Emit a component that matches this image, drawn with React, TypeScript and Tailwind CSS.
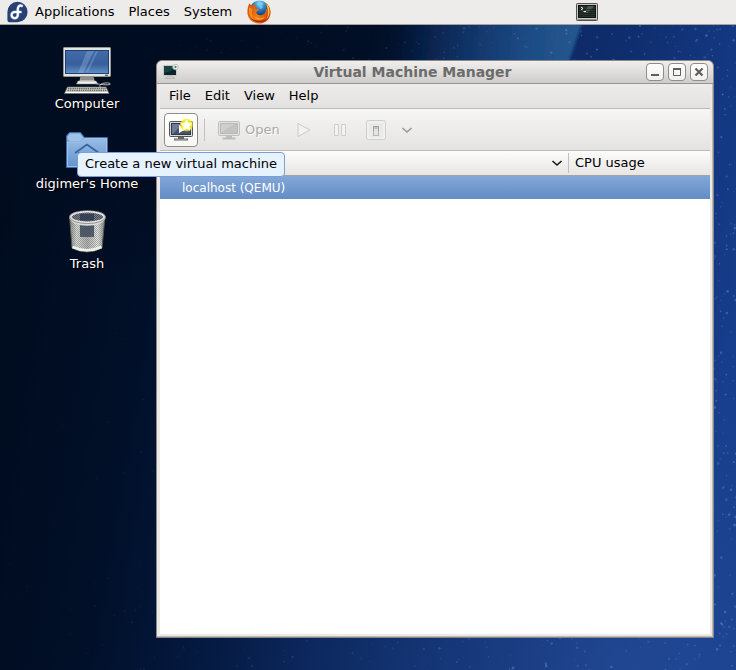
import React from 'react';

interface DesktopIconProps {
  label: string;
  children: React.ReactNode;
}

interface Star {
  x: number;
  y: number;
  r: number;
  o: number;
}

// small seeded generator so the wallpaper is the same on every load
const makeStars = (count: number): Star[] => {
  let seed = 4711;
  const next = () => {
    seed = (seed * 16807) % 2147483647;
    return seed / 2147483647;
  };
  return Array.from({ length: count }, () => {
    const x = Math.sqrt(next()) * 736;
    const y = next() * 670;
    return { x, y, r: 0.6 + next() * 0.8, o: (0.08 + next() * 0.35) * Math.min(1, (x * x) / 360000 + (y * 0.15) / 600) };
  });
};

const stars = makeStars(2200);

const Wallpaper = () => (
  <svg
    className="absolute inset-0 -z-10 h-full w-full"
    viewBox="0 0 736 670"
    preserveAspectRatio="xMidYMid slice"
    aria-hidden="true"
  >
    <defs>
      <linearGradient id="sky" x1="0" y1="0.35" x2="1" y2="0.5">
        <stop offset="0" stopColor="#000c1e" />
        <stop offset="0.2" stopColor="#010f28" />
        <stop offset="0.35" stopColor="#04193e" />
        <stop offset="0.5" stopColor="#092253" />
        <stop offset="0.8" stopColor="#0f2e6e" />
        <stop offset="1" stopColor="#163d8b" />
      </linearGradient>
      <radialGradient id="glow" cx="620" cy="680" r="400" gradientUnits="userSpaceOnUse">
        <stop offset="0" stopColor="#284e9a" stopOpacity="0.7" />
        <stop offset="1" stopColor="#1c4590" stopOpacity="0" />
      </radialGradient>
      <radialGradient id="dusk" cx="200" cy="0" r="300" gradientUnits="userSpaceOnUse">
        <stop offset="0" stopColor="#000c20" />
        <stop offset="0.6" stopColor="#000c20" stopOpacity="0.85" />
        <stop offset="1" stopColor="#000c20" stopOpacity="0" />
      </radialGradient>
      <linearGradient id="beam" x1="400" y1="25" x2="582" y2="45" gradientUnits="userSpaceOnUse">
        <stop offset="0" stopColor="#12386c" stopOpacity="0" />
        <stop offset="0.35" stopColor="#153d72" stopOpacity="0.6" />
        <stop offset="0.7" stopColor="#1f4f88" stopOpacity="0.9" />
        <stop offset="1" stopColor="#24588f" />
      </linearGradient>
      <filter id="soften">
        <feGaussianBlur stdDeviation="1.5" />
      </filter>
    </defs>
    <rect width="736" height="670" fill="url(#sky)" />
    <rect width="736" height="670" fill="url(#glow)" />
    <rect width="736" height="670" fill="url(#dusk)" />
    <path d="M400 0H590L566 70L480 300H330Z" fill="url(#beam)" filter="url(#soften)" />
    {stars.map((s, i) => (
      <circle key={i} cx={s.x} cy={s.y} r={s.r} fill="#7fa6e6" opacity={s.o} />
    ))}
  </svg>
);

const FedoraLogo = () => (
  <svg className="h-[22px] w-[21px]" viewBox="0 0 21 22" aria-hidden="true">
    <path d="M10.500.8A10.100 10.200 0 1 1 10.500 21.200H2.500Q.4 21.200.4 19V11A10.100 10.200 0 0 1 10.500.8Z" fill="#294172" />
    <path
      d="M14.800 4.900C12.300 3.900 10.800 5.700 10.800 8.300V14A3.100 3.100 0 1 1 7.700 11H13.500"
      fill="none"
      stroke="#7c96c8"
      strokeWidth="3"
      strokeLinecap="round"
    />
    <path
      d="M14.800 4.900C12.300 3.900 10.800 5.700 10.800 8.300V14A3.100 3.100 0 1 1 7.700 11H13.500"
      fill="none"
      stroke="#fff"
      strokeWidth="2"
      strokeLinecap="round"
    />
  </svg>
);

const FirefoxLogo = () => (
  <svg className="h-6 w-6" viewBox="0 0 24 24" aria-hidden="true">
    <defs>
      <radialGradient id="globe" cx="0.5" cy="0.15" r="0.8">
        <stop offset="0" stopColor="#8cdaf2" />
        <stop offset="0.35" stopColor="#2e87cb" />
        <stop offset="0.8" stopColor="#10306e" />
      </radialGradient>
      <linearGradient id="fox" x1="0" y1="0.3" x2="1" y2="0.8">
        <stop offset="0" stopColor="#dc520c" />
        <stop offset="0.5" stopColor="#ee7d18" />
        <stop offset="1" stopColor="#c93707" />
      </linearGradient>
    </defs>
    <circle cx="12.500" cy="10.500" r="10" fill="url(#globe)" />
    <path d="M11 1.500Q15 1 16.500 3.500L15 5.500L16 8L13 9L12 6L10 4Z" fill="#7ccdec" opacity="0.7" />
    <path
      d="M2.500 3.200C3 4.500 4 5.200 5.300 5.400C6.800 4.500 8.600 4.800 10 5.700C8.800 6.300 8.200 7.300 8.300 8.400C9.500 8.700 11 8.500 12 9.300C11.600 10.800 10 11 9.300 12.300C9.700 14.800 12.500 16 15.200 15C18 14 19.200 11.500 18.700 8.500C19.500 9 19.900 9.500 20.200 10.300C20.500 7 19.500 4.500 17.500 2.500C21.500 4.400 23.600 8 23.600 12.200C23.600 18.700 18.500 23.600 12 23.600C5.500 23.600.4 18.500.4 12C.4 8.500 1.200 5.500 2.500 3.200Z"
      fill="url(#fox)"
    />
    <path d="M20 4.500C23.500 9 23.300 15.500 19.500 19C22 14.500 21.500 10 20.200 7Z" fill="#ffd24a" />
    <path d="M2.300 7C1 12 3 17.500 7.500 20C5 16 4.300 12.500 5.200 9.200Z" fill="#f39021" />
    <path d="M7 15.500C10 19 14.500 19 18.300 16.500C15 21 9.500 21 7 15.500Z" fill="#f9a632" />
    <path d="M3 17.500C7 23.500 16 24 21 18C17 21.500 8 22 3 17.500Z" fill="#a8260b" />
  </svg>
);

const TerminalIcon = () => (
  <svg className="h-5 w-[22px]" viewBox="0 0 22 20" aria-hidden="true">
    <rect x="0.500" y="1.500" width="21" height="17" rx="0.800" fill="#c9cac5" stroke="#50524e" />
    <path d="M1.500 17.500H20.500" stroke="#8b8d88" />
    <rect x="2.500" y="3.500" width="17" height="12" fill="#28322f" stroke="#111" />
    <path d="M12 4L8 11H12L18 4Z" fill="#68706c" opacity="0.6" />
    <path d="M3 7.500H19M3 9.500H19M3 11.500H19M3 13.500H19" stroke="#141b19" strokeWidth="0.600" />
    <path d="M5 5L7 6.500L5 8M7.500 9.500H10" fill="none" stroke="#fff" />
  </svg>
);

const ComputerIcon = () => (
  <svg className="h-12 w-12" viewBox="0 0 48 48" aria-hidden="true">
    <defs>
      <linearGradient id="screen" x1="0" y1="0" x2="0" y2="1">
        <stop offset="0" stopColor="#416ca9" />
        <stop offset="0.6" stopColor="#375f9c" />
        <stop offset="1" stopColor="#6390c8" />
      </linearGradient>
    </defs>
    <path d="M18 29H30L32 35H16Z" fill="#cfcfca" />
    <path d="M18 30H30L31 33H17Z" fill="#8e8e88" />
    <path d="M15 34H33L35 37H13.500Z" fill="#f2f2ee" stroke="#8a8a84" strokeWidth="0.600" />
    <rect x="0.500" y="0.500" width="47" height="29" rx="0.800" fill="#e5e5df" stroke="#969890" />
    <rect x="2.500" y="3.500" width="43" height="23" fill="url(#screen)" stroke="#1d4076" />
    <path d="M24 4H31L20 26H15ZM33 4H35L25 25H23Z" fill="#a8c4e4" opacity="0.300" />
    <path d="M42 28.300H45" stroke="#444" />
    <path d="M32 36.500Q42 38.500 47 37.500Q48 35.500 42 36Q36 36.500 37 40" fill="none" stroke="#b9bbb5" strokeWidth="1" />
    <path d="M4.500 40H43L46 46.500H1.500Z" fill="#d8d8d2" stroke="#777972" strokeWidth="0.600" />
    <path d="M5 41.500H43M4.500 43.500H44" stroke="#666862" strokeWidth="1.300" strokeDasharray="1.500 0.700" />
    <path d="M2.500 45.500H45" stroke="#fff" />
  </svg>
);

const HomeFolderIcon = () => (
  <svg className="h-12 w-12" viewBox="0 0 48 48" aria-hidden="true">
    <defs>
      <linearGradient id="folder" x1="0" y1="0" x2="0" y2="1">
        <stop offset="0" stopColor="#99bce4" />
        <stop offset="1" stopColor="#6494cd" />
      </linearGradient>
    </defs>
    <path d="M3.500 40.500V9L6.500 5.500H17.500L21.500 10.500H44.500V40.500Z" fill="#6f9cd2" stroke="#3e6ba9" />
    <path d="M4.500 12.500V9.500L7 6.500H17L20.500 11L17 14.500H7Z" fill="#9fc2e8" stroke="#7fa8d8" strokeWidth="0.700" />
    <path d="M4.500 15H17.500L21.500 11.500H43.500V39.500H4.500Z" fill="url(#folder)" stroke="#a9c8ec" strokeWidth="0.800" />
    <path d="M12 26L24 17.500L36 26M16 25V34H32V25" fill="none" stroke="#3465a4" strokeWidth="1.800" />
  </svg>
);

const TrashIcon = () => (
  <svg className="h-12 w-12" viewBox="0 0 48 48" aria-hidden="true">
    <defs>
      <linearGradient id="can" x1="0" y1="0" x2="1" y2="0">
        <stop offset="0" stopColor="#8b8d89" />
        <stop offset="0.2" stopColor="#dcddd9" />
        <stop offset="0.5" stopColor="#b4b6b3" />
        <stop offset="0.8" stopColor="#e6e6e3" />
        <stop offset="1" stopColor="#8b8d89" />
      </linearGradient>
      <linearGradient id="inside" x1="0" y1="0" x2="0" y2="1">
        <stop offset="0" stopColor="#33405a" />
        <stop offset="1" stopColor="#3b475e" />
      </linearGradient>
      <pattern id="mesh" width="2" height="2" patternUnits="userSpaceOnUse">
        <rect width="1" height="1" fill="#3c3e3b" />
        <rect x="1" y="1" width="1" height="1" fill="#3c3e3b" />
      </pattern>
    </defs>
    <path d="M6.500 9L9 41Q24 49 39 41L42 9Z" fill="url(#can)" stroke="#555753" />
    <path d="M17 17H31V30H17Z" fill="url(#inside)" opacity="0.8" />
    <path d="M8 13L9.500 39Q24 46 38.500 39L41 13Q24 22 8 13Z" fill="url(#mesh)" opacity="0.350" />
    <path d="M9.500 40Q24 46.500 38.500 40" fill="none" stroke="#f0f0ed" strokeWidth="2.500" />
    <ellipse cx="24.500" cy="10" rx="17" ry="5.500" fill="#747b8a" stroke="#e8e8e5" strokeWidth="2.200" />
    <ellipse cx="24.500" cy="10" rx="15" ry="4.500" fill="url(#mesh)" opacity="0.7" />
    <path d="M17 7H31V13Q24 14 17 13Z" fill="#2c3850" opacity="0.8" />
    <path d="M7.500 11Q11 17.500 24.500 17.500Q38 17.500 41.500 11" fill="none" stroke="#dcddd9" strokeWidth="2.600" />
    <ellipse cx="24.500" cy="10" rx="18" ry="6.500" fill="none" stroke="#5b5d59" strokeWidth="0.600" />
  </svg>
);

const TitleIcon = () => (
  <svg className="h-4 w-4" viewBox="0 0 16 16" aria-hidden="true">
    <rect x="0.500" y="1.500" width="13" height="10" fill="#0b2429" stroke="#c6c9c5" />
    <path d="M1 2H12L8 7L1 9Z" fill="#1f4a46" opacity="0.8" />
    <path d="M5 12H9L12 14.500H2Z" fill="#cdcfcb" stroke="#a0a29d" strokeWidth="0.500" />
    <circle cx="12.500" cy="3" r="2.800" fill="#e6ecea" stroke="#a9b5b2" strokeWidth="0.700" />
    <path d="M11.700 1.500L14 3L11.700 4.500Z" fill="#2d7470" />
  </svg>
);

const NewMachineIcon = () => (
  <svg className="h-6 w-6" viewBox="0 0 24 24" aria-hidden="true">
    <defs>
      <radialGradient id="halo">
        <stop offset="0" stopColor="#fff83a" />
        <stop offset="0.75" stopColor="#f5ea10" stopOpacity="0.95" />
        <stop offset="1" stopColor="#f7ed12" stopOpacity="0" />
      </radialGradient>
    </defs>
    <rect x="0.500" y="3.500" width="23" height="15" rx="1" fill="#d8d9d5" stroke="#555753" />
    <rect x="2.500" y="5.500" width="19" height="11" fill="#46546f" stroke="#2f3850" />
    <path d="M3 6H13L4 16H3Z" fill="#6d7b95" />
    <path d="M10 7L17 11L10 15Z" fill="#fff" />
    <path d="M9 19H15V20.500H19V22.500H5V20.500H9Z" fill="#666864" />
    <path d="M6 21.500H18" stroke="#a5a7a2" strokeWidth="0.700" />
    <circle cx="17.500" cy="7" r="7" fill="url(#halo)" />
    <path d="M17.500 1.500L19.300 5L23 5.600L20.300 8.300L21 12.300L17.500 10.500L14 12.300L14.700 8.300L12 5.600L15.700 5Z" fill="#fff" stroke="#fffbc0" strokeWidth="0.800" />
  </svg>
);

const MonitorIcon = () => (
  <svg className="h-6 w-[22px]" viewBox="0 0 22 24" aria-hidden="true">
    <rect x="0.500" y="3.500" width="21" height="14" rx="1" fill="#e2e2e0" stroke="#c0c0bd" />
    <rect x="2.500" y="5.500" width="17" height="10" fill="#c3c3c1" stroke="#b9b9b7" />
    <path d="M3 6H16L4 14H3Z" fill="#cfcfcd" />
    <path d="M8 18H14V19.500H17.500V21.500H4.500V19.500H8Z" fill="#bcbcb9" />
  </svg>
);

const PlayIcon = () => (
  <svg className="h-4 w-[14px]" viewBox="0 0 14 16" aria-hidden="true">
    <path d="M1 1.500L13 8L1 14.500Z" fill="#f1f1f0" stroke="#cacac8" />
  </svg>
);

const PauseIcon = () => (
  <svg className="h-4 w-[14px]" viewBox="0 0 14 16" aria-hidden="true">
    <path d="M1.500 2.500H5.500V13.500H1.500ZM8.500 2.500H12.500V13.500H8.500Z" fill="#f3f3f2" stroke="#cdcdcb" />
  </svg>
);

const ShutdownIcon = () => (
  <svg className="h-5 w-5" viewBox="0 0 20 20" aria-hidden="true">
    <rect x="0.500" y="0.500" width="19" height="19" rx="2" fill="#f0f0ef" stroke="#cececc" />
    <rect x="3" y="3" width="14" height="14" fill="#e9e9e7" />
    <rect x="7.500" y="6.500" width="5" height="9" fill="#e4e4e2" stroke="#b6b6b4" />
    <path d="M7 6.500H13M8 8H12M7.500 6V11M12.500 6V11" stroke="#a2a2a0" />
  </svg>
);

const Chevron = ({ color }: { color: string }) => (
  <svg className="h-2 w-3" viewBox="0 0 12 8" aria-hidden="true">
    <path d="M1.500 2L6 6L10.500 2" fill="none" stroke={color} strokeWidth="1.600" />
  </svg>
);

const DesktopIcon = ({ label, children }: DesktopIconProps) => (
  <button className="flex flex-col items-center text-white">
    {children}
    <span className="leading-[18px] [text-shadow:1px_1px_1px_#000]">{label}</span>
  </button>
);

const WindowButton = ({ label, children }: DesktopIconProps) => (
  <button
    aria-label={label}
    className="flex h-[18px] w-[18px] items-center justify-center rounded border border-[#8f8c89] bg-gradient-to-b from-white to-[#f1f0ef]"
  >
    <svg className="h-2.5 w-2.5" viewBox="0 0 10 10" fill="none" stroke="#5f5f5f" strokeWidth="2" aria-hidden="true">
      {children}
    </svg>
  </button>
);

const TopPanel = () => (
  <header className="flex h-[25px] items-center border-b border-[#a5a299] bg-[#edeceb] pb-px pl-[7px]">
    <FedoraLogo />
    <nav className="flex flex-1 items-center">
      <button className="px-[7px]">Applications</button>
      <button className="px-[7px]">Places</button>
      <button className="px-[7px]">System</button>
      <button aria-label="Firefox" className="ml-2">
        <FirefoxLogo />
      </button>
    </nav>
    <button aria-label="Terminal" className="mr-[138px]">
      <TerminalIcon />
    </button>
  </header>
);

const Toolbar = () => (
  <div className="flex h-[42px] items-center border-b border-[#bcbab8] bg-gradient-to-b from-[#f6f6f5] to-[#e4e3e1] pl-1 text-[#aaa9a7]">
    <div className="relative">
      <button
        aria-label="New"
        aria-describedby="new-tip"
        className="flex h-[34px] w-[34px] items-center justify-center rounded border border-[#8f8d8a] bg-gradient-to-b from-white to-[#f7f7f6]"
      >
        <NewMachineIcon />
      </button>
      <div
        id="new-tip"
        role="tooltip"
        className="absolute top-[39px] left-[-87px] z-10 rounded border border-[#7a9fd4] bg-[#e6f2fd] px-[7px] pt-px pb-0.5 leading-5 whitespace-nowrap text-black"
      >
        Create a new virtual machine
      </div>
    </div>
    <span className="ml-1.5 h-[22px] w-px bg-[#c3c2c0]" />
    <button disabled className="ml-[13px] flex items-center gap-[5px] [text-shadow:1px_1px_0_#fff]">
      <MonitorIcon />
      Open
    </button>
    <button disabled aria-label="Run" className="ml-[17px]">
      <PlayIcon />
    </button>
    <button disabled aria-label="Pause" className="ml-[22px]">
      <PauseIcon />
    </button>
    <button disabled aria-label="Shut down" className="ml-[19px]">
      <ShutdownIcon />
    </button>
    <button disabled aria-label="Shut down options" className="ml-[15px]">
      <Chevron color="#9b9a98" />
    </button>
  </div>
);

const MachineTable = () => (
  <table className="w-full table-fixed border-separate border-spacing-0 text-left">
    <thead>
      <tr className="h-[25px] bg-gradient-to-b from-[#fcfcfb] to-[#e6e5e3]">
        <th className="border-b border-[#a5a29f] p-0 font-normal">
          <button aria-label="Sort by name" className="flex w-full justify-end pr-[5px]">
            <Chevron color="#1a1a1a" />
          </button>
        </th>
        <th className="w-[142px] border-b border-[#a5a29f] p-0 font-normal">
          <div className="border-l border-[#c1c0be] pl-1.5">CPU usage</div>
        </th>
      </tr>
    </thead>
    <tbody>
      <tr className="h-[23px] bg-gradient-to-b from-[#83a7d8] to-[#638dc5] text-xs text-white">
        <td className="p-0 pl-[22px]">localhost (QEMU)</td>
        <td className="p-0" />
      </tr>
    </tbody>
  </table>
);

const ManagerWindow = () => (
  <section className="mt-[35px] mr-[22px] mb-8 flex flex-1 flex-col rounded-t-md border border-[#8b8782] bg-[#ebeae8] shadow-[inset_-1px_-1px_0_#bcbab5]">
    <div className="flex h-[23px] items-center rounded-t-md border-b border-[#989490] bg-gradient-to-b from-[#f0efee] to-[#cfcdcb] pr-[5px] pl-1.5">
      <TitleIcon />
      <h1 className="flex-1 text-center text-sm leading-5 font-bold text-[#6b6b6b]">Virtual Machine Manager</h1>
      <div className="flex gap-1">
        <WindowButton label="Minimize">
          <path d="M1 8H9" />
        </WindowButton>
        <WindowButton label="Maximize">
          <path d="M1.500 1.500H8.500V8.500H1.500Z" strokeWidth="1" />
          <path d="M1 2H9" />
        </WindowButton>
        <WindowButton label="Close">
          <path d="M1.500 1.500L8.500 8.500M8.500 1.500L1.500 8.500" strokeWidth="2.200" />
        </WindowButton>
      </div>
    </div>
    <div className="mx-[3px] mb-[3px] flex flex-1 flex-col bg-white">
      <nav className="flex h-[25px] items-center border-b border-[#bcbab8] bg-gradient-to-b from-[#edecea] to-[#e3e2e0] pl-0.5">
        <button className="px-[7px]">File</button>
        <button className="px-[7px]">Edit</button>
        <button className="px-[7px]">View</button>
        <button className="px-[7px]">Help</button>
      </nav>
      <Toolbar />
      <MachineTable />
    </div>
  </section>
);

export default function App() {
  return (
    <div className="relative isolate flex min-h-screen flex-col overflow-hidden bg-[#010f27] font-['DejaVu_Sans',sans-serif] text-[13px] leading-5 text-black">
      <Wallpaper />
      <TopPanel />
      <main className="flex flex-1">
        <aside className="flex w-[156px] flex-col items-center gap-3.5 pt-[22px] pl-[18px]">
          <DesktopIcon label="Computer">
            <ComputerIcon />
          </DesktopIcon>
          <DesktopIcon label="digimer's Home">
            <HomeFolderIcon />
          </DesktopIcon>
          <DesktopIcon label="Trash">
            <TrashIcon />
          </DesktopIcon>
        </aside>
        <ManagerWindow />
      </main>
    </div>
  );
}
